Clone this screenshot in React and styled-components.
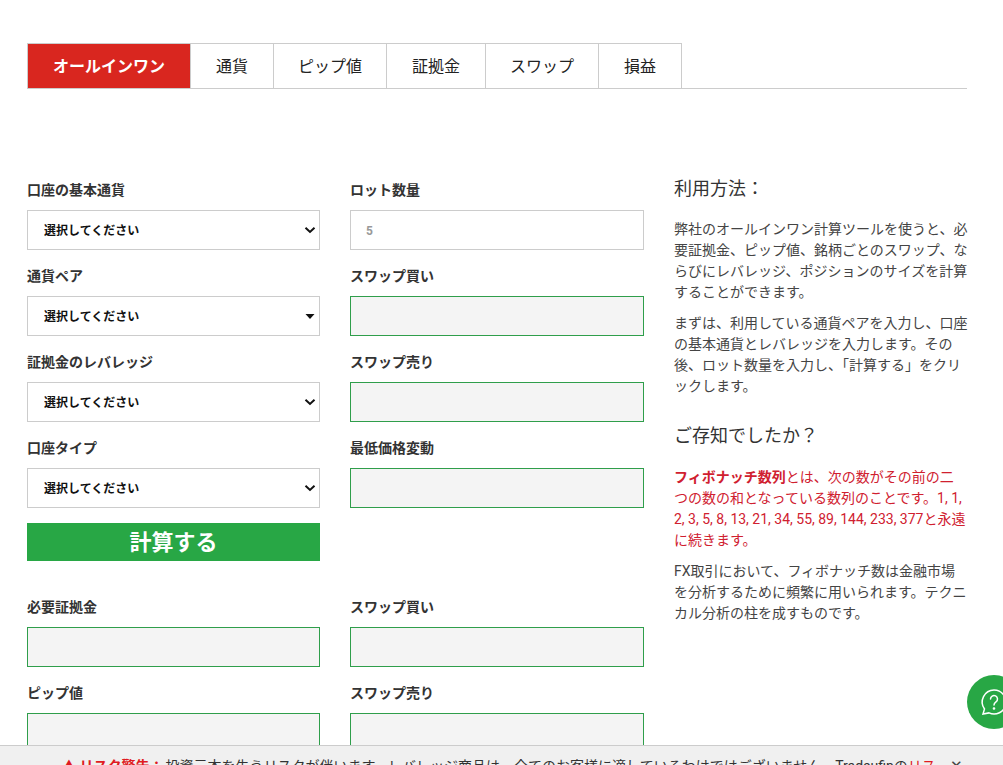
import React from 'react';
import styled, { createGlobalStyle } from 'styled-components';

const GlobalStyle = createGlobalStyle`
  html, body {
    margin: 0;
    height: 100%;
    overflow: hidden;
    background: #fff;
  }
  body {
    font-family: Roboto, "Noto Sans CJK JP", sans-serif;
    color: #333;
  }
  * {
    box-sizing: border-box;
  }
`;

const Page = styled.div`
  padding: 43px 36px 0 27px;
`;

const Tabs = styled.ul`
  display: flex;
  margin: 0;
  padding: 0;
  list-style: none;
  height: 46px;
  border-bottom: 1px solid #ccc;
`;

const Tab = styled.li`
  display: flex;
  align-items: center;
  justify-content: center;
  width: ${props => props.$width}px;
  height: 46px;
  padding-bottom: 2px;
  font-size: 16px;
  font-weight: ${props => (props.$active ? 700 : 400)};
  color: ${props => (props.$active ? '#fff' : '#222')};
  background: ${props => (props.$active ? '#d9261f' : '#fff')};
  border: 1px solid #ccc;
  border-left-width: ${props => (props.$first ? 1 : 0)}px;
`;

const Columns = styled.div`
  display: grid;
  grid-template-columns: 293px 294px 294px;
  column-gap: 30px;
  margin-top: 91px;
`;

const FormArea = styled.div`
  grid-column: span 2;
`;

const FormGrid = styled.div`
  display: grid;
  grid-template-columns: 293px 294px;
  column-gap: 30px;
`;

const Stack = styled.div`
  display: flex;
  flex-direction: column;
`;

const Field = styled.div`
  height: 86px;
`;

const Label = styled.label`
  display: block;
  height: 20px;
  line-height: 20px;
  margin-bottom: 10px;
  font-size: 14px;
  font-weight: 700;
  color: #333;
`;

const SelectWrap = styled.div`
  position: relative;
  height: 40px;
`;

const Select = styled.select`
  appearance: none;
  display: block;
  width: 100%;
  height: 40px;
  padding: 2px 16px 0;
  font-family: inherit;
  font-size: 12px;
  font-weight: 700;
  color: #111;
  background: #fff;
  border: 1px solid #ccc;
  border-radius: 0;
`;

const Arrow = styled.svg`
  position: absolute;
  top: 15px;
  right: 4px;
  width: 12px;
  height: 10px;
  pointer-events: none;
`;

const Input = styled.input`
  display: block;
  width: 100%;
  height: 40px;
  padding: 2px 15px 0;
  font-family: inherit;
  font-size: 12px;
  font-weight: 700;
  color: #999;
  background: ${props => (props.$result ? '#f4f4f4' : '#fff')};
  border: 1px solid ${props => (props.$result ? '#2f9e4b' : '#ccc')};
  border-radius: 0;
  &::placeholder {
    color: #999;
  }
`;

const CalcButton = styled.button`
  display: block;
  width: 100%;
  height: 38px;
  margin-top: -1px;
  padding: 0 0 4px;
  font-family: inherit;
  font-size: 22px;
  font-weight: 700;
  color: #fff;
  background: #28a745;
  border: 0;
`;

const Results = styled(FormGrid)`
  margin-top: 36px;
`;

const Side = styled.aside`
  font-size: 14px;
  line-height: 21px;
  color: #444;
`;

const SideTitle = styled.h3`
  margin: ${props => (props.$top ? '-5px 0 16px' : '25px 0 17px')};
  height: 28px;
  line-height: 28px;
  font-size: 18px;
  font-weight: 400;
  color: #333;
`;

const Para = styled.p`
  margin: 0 0 10px;
  padding-right: ${props => (props.$red ? 2 : 0)}px;
  color: ${props => (props.$red ? '#d0202f' : '#444')};
`;

const Footer = styled.div`
  position: fixed;
  left: 0;
  right: 0;
  bottom: 0;
  height: 20px;
  overflow: hidden;
  background: #f0f0f0;
  border-top: 1px solid #ccc;
`;

const FooterText = styled.p`
  margin: 10px 0 0 62px;
  width: 876px;
  font-size: 14px;
  line-height: 20px;
  color: #333;
`;

const Warn = styled.strong`
  color: #e01b22;
  margin-right: 2px;
`;

const RiskLink = styled.span`
  color: #e01b22;
`;

const Close = styled.span`
  position: absolute;
  top: 10px;
  left: 950px;
  font-size: 15px;
  line-height: 20px;
  color: #444;
`;

const Chat = styled.div`
  position: fixed;
  left: 967px;
  top: 675px;
  width: 54px;
  height: 54px;
  display: flex;
  align-items: center;
  justify-content: center;
  border-radius: 50%;
  background: #28a745;
`;

const fields = [
  ['口座の基本通貨', 'chevron'],
  ['通貨ペア', 'caret'],
  ['証拠金のレバレッジ', 'chevron'],
  ['口座タイプ', 'chevron'],
];

const inputs = [
  ['ロット数量', false],
  ['スワップ買い', true],
  ['スワップ売り', true],
  ['最低価格変動', true],
];

const tabs = [
  ['オールインワン', 164],
  ['通貨', 83],
  ['ピップ値', 113],
  ['証拠金', 99],
  ['スワップ', 113],
  ['損益', 83],
];

function SelectArrow({ type }) {
  if (type === 'caret') {
    return (
      <Arrow viewBox="0 0 12 10">
        <path d="M1.500 3h9L6 8z" fill="#111" />
      </Arrow>
    );
  }
  return (
    <Arrow viewBox="0 0 12 10">
      <path d="M1.500 2.800L6 7l4.500-4.200" fill="none" stroke="#111" strokeWidth="2" />
    </Arrow>
  );
}

export default function App() {
  return (
    <Page>
      <GlobalStyle />
      <Tabs>
        {tabs.map(([name, width], i) => (
          <Tab key={name} $width={width} $active={i === 0} $first={i === 0}>{name}</Tab>
        ))}
      </Tabs>
      <Columns>
        <FormArea>
          <FormGrid>
            <Stack>
              {fields.map(([label, arrow]) => (
                <Field key={label}>
                  <Label>{label}</Label>
                  <SelectWrap>
                    <Select>
                      <option>選択してください</option>
                    </Select>
                    <SelectArrow type={arrow} />
                  </SelectWrap>
                </Field>
              ))}
              <CalcButton>計算する</CalcButton>
            </Stack>
            <Stack>
              {inputs.map(([label, result]) => (
                <Field key={label}>
                  <Label>{label}</Label>
                  <Input $result={result} readOnly={result} placeholder={result ? '' : '5'} />
                </Field>
              ))}
            </Stack>
          </FormGrid>
          <Results>
            <Stack>
              <Field>
                <Label>必要証拠金</Label>
                <Input $result readOnly />
              </Field>
              <Field>
                <Label>ピップ値</Label>
                <Input $result readOnly />
              </Field>
            </Stack>
            <Stack>
              <Field>
                <Label>スワップ買い</Label>
                <Input $result readOnly />
              </Field>
              <Field>
                <Label>スワップ売り</Label>
                <Input $result readOnly />
              </Field>
            </Stack>
          </Results>
        </FormArea>
        <Side>
          <SideTitle $top>利用方法：</SideTitle>
          <Para>弊社のオールインワン計算ツールを使うと、必要証拠金、ピップ値、銘柄ごとのスワップ、ならびにレバレッジ、ポジションのサイズを計算することができます。</Para>
          <Para>まずは、利用している通貨ペアを入力し、口座の基本通貨とレバレッジを入力します。その後、ロット数量を入力し、「計算する」をクリックします。</Para>
          <SideTitle>ご存知でしたか？</SideTitle>
          <Para $red><strong>フィボナッチ数列</strong>とは、次の数がその前の二つの数の和となっている数列のことです。1, 1, 2, 3, 5, 8, 13, 21, 34, 55, 89, 144, 233, 377と永遠に続きます。</Para>
          <Para>FX取引において、フィボナッチ数は金融市場を分析するために頻繁に用いられます。テクニカル分析の柱を成すものです。</Para>
        </Side>
      </Columns>
      <Chat>
        <svg width="30" height="30" viewBox="0 0 30 30" fill="none" stroke="#fff" strokeWidth="1.500">
          <path d="M15 3a12 12 0 1 1-5 22.900L4 27l1.500-5A12 12 0 0 1 15 3z" />
          <path d="M11.500 12a3.500 3.500 0 1 1 5.500 2.900c-1.300.9-2 1.500-2 3" strokeLinecap="round" />
          <circle cx="15" cy="21.500" r=".6" fill="#fff" />
        </svg>
      </Chat>
      <Footer>
        <FooterText>
          <Warn>▲ リスク警告：</Warn>投資元本を失うリスクが伴います。レバレッジ商品は、全てのお客様に適しているわけではございません。Tradeufinの<RiskLink>リスク開示</RiskLink>をご確認ください。
        </FooterText>
        <Close>✕</Close>
      </Footer>
    </Page>
  );
}
